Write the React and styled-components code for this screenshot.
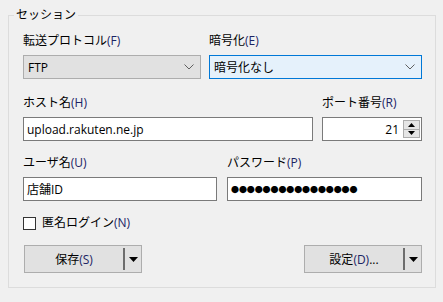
import React from "react";
import styled, { createGlobalStyle } from "styled-components";

const GlobalStyle = createGlobalStyle`
  html, body {
    margin: 0;
    padding: 0;
    background: #f0f0f0;
  }
  body {
    font-family: "Open Sans", "Noto Sans CJK JP", sans-serif;
    font-size: 12px;
    color: #000;
  }
`;

function Chevron() {
  return (
    <svg width="10" height="6" viewBox="0 0 10 6">
      <path d="M0.5 0.5 L5 5 L9.5 0.5" fill="none" stroke="#606060" strokeWidth="1" />
    </svg>
  );
}

function Triangle({ down = true, w = 9, h = 5 }) {
  return (
    <svg width={w} height={h} viewBox={`0 0 ${w} ${h}`}>
      <path d={down ? `M0 0 L${w} 0 L${w / 2} ${h} Z` : `M0 ${h} L${w} ${h} L${w / 2} 0 Z`} fill="#000" />
    </svg>
  );
}

function App() {
  return (
    <>
      <GlobalStyle />
      <Group>
        <Legend>セッション</Legend>

        <Row $cols="178px 213px" $gap="8px" $top="0px">
          <Field>
            <Label>
              転送プロトコル<Key>(F)</Key>
            </Label>
            <Combo>
              <span>FTP</span>
              <Chevron />
            </Combo>
          </Field>
          <Field>
            <Label>
              暗号化<Key>(E)</Key>
            </Label>
            <Combo $focused>
              <span>暗号化なし</span>
              <Chevron />
            </Combo>
          </Field>
        </Row>

        <Row $cols="290px 100px" $gap="9px" $top="16px">
          <Field>
            <Label>
              ホスト名<Key>(H)</Key>
            </Label>
            <TextBox>upload.rakuten.ne.jp</TextBox>
          </Field>
          <Field>
            <Label>
              ポート番号<Key>(R)</Key>
            </Label>
            <SpinBox>
              <SpinValue>21</SpinValue>
              <Spinner>
                <SpinButton>
                  <Triangle down={false} w={7} h={4} />
                </SpinButton>
                <SpinButton>
                  <Triangle w={7} h={4} />
                </SpinButton>
              </Spinner>
            </SpinBox>
          </Field>
        </Row>

        <Row $cols="194px 195px" $gap="10px" $top="14px">
          <Field>
            <Label>
              ユーザ名<Key>(U)</Key>
            </Label>
            <TextBox>店舗ID</TextBox>
          </Field>
          <Field>
            <Label>
              パスワード<Key>(P)</Key>
            </Label>
            <TextBox>
              <Dots>{"●".repeat(16)}</Dots>
            </TextBox>
          </Field>
        </Row>

        <CheckRow>
          <CheckBox />
          <span>
            匿名ログイン<Key>(N)</Key>
          </span>
        </CheckRow>

        <ButtonRow>
          <SplitButton>
            <ButtonMain>
              保存<Key>(S)</Key>
            </ButtonMain>
            <ButtonSeparator />
            <ButtonArrow>
              <Triangle />
            </ButtonArrow>
          </SplitButton>
          <SplitButton>
            <ButtonMain>
              設定<Key>(D)</Key>...
            </ButtonMain>
            <ButtonSeparator />
            <ButtonArrow>
              <Triangle />
            </ButtonArrow>
          </SplitButton>
        </ButtonRow>
      </Group>
    </>
  );
}

const Group = styled.fieldset`
  box-sizing: border-box;
  margin: 7px 7px 0 8px;
  height: 281px;
  border: 1px solid #dcdcdc;
  padding: 10px 12px 0 14px;
  min-width: 0;
`;

const Legend = styled.legend`
  margin-left: -9px;
  padding: 0 2px;
  line-height: 16px;
  font-size: 12px;
`;

const Row = styled.div`
  display: grid;
  grid-template-columns: ${(p) => p.$cols};
  column-gap: ${(p) => p.$gap};
  margin-top: ${(p) => p.$top};
`;

const Field = styled.div`
  display: flex;
  flex-direction: column;
  gap: 6px;
`;

const Label = styled.div`
  height: 16px;
  line-height: 16px;
  white-space: nowrap;
`;

const Key = styled.span`
  color: #1b2464;
`;

const Combo = styled.div`
  box-sizing: border-box;
  height: 24px;
  display: flex;
  align-items: center;
  justify-content: space-between;
  padding: 0 6px 0 4px;
  background: ${(p) => (p.$focused ? "#e5f1fb" : "#e1e1e1")};
  border: 1px solid ${(p) => (p.$focused ? "#0078d7" : "#adadad")};
`;

const TextBox = styled.div`
  box-sizing: border-box;
  height: 24px;
  display: flex;
  align-items: center;
  padding: 0 3px;
  background: #fff;
  border: 1px solid #7a7a7a;
  white-space: nowrap;
  overflow: hidden;
`;

const Dots = styled.span`
  font-family: "Noto Sans CJK JP", sans-serif;
  font-size: 8px;
  letter-spacing: -0.1px;
`;

const SpinBox = styled(TextBox)`
  justify-content: flex-end;
  padding: 0 1px 0 3px;
  gap: 4px;
`;

const SpinValue = styled.span``;

const Spinner = styled.div`
  display: flex;
  flex-direction: column;
  width: 17px;
  height: 18px;
`;

const SpinButton = styled.div`
  box-sizing: border-box;
  flex: 1;
  display: flex;
  align-items: center;
  justify-content: center;
  background: #e5e5e5;
  border: 1px solid #adadad;
  & + & {
    border-top: none;
  }
`;

const CheckRow = styled.label`
  display: flex;
  align-items: center;
  gap: 6px;
  height: 16px;
  line-height: 16px;
  margin-top: 14px;
`;

const CheckBox = styled.span`
  box-sizing: border-box;
  width: 13px;
  height: 13px;
  background: #fff;
  border: 1px solid #333;
`;

const ButtonRow = styled.div`
  display: flex;
  justify-content: space-between;
  margin-top: 14px;
  padding: 0 1px;
`;

const SplitButton = styled.div`
  box-sizing: border-box;
  width: 118px;
  height: 28px;
  display: flex;
  align-items: center;
  background: #e1e1e1;
  border: 1px solid #adadad;
`;

const ButtonMain = styled.div`
  flex: 1;
  text-align: center;
  white-space: nowrap;
`;

const ButtonSeparator = styled.div`
  width: 2px;
  height: 22px;
  background: #6d6d6d;
`;

const ButtonArrow = styled.div`
  width: 16px;
  display: flex;
  justify-content: center;
`;

export default App;
